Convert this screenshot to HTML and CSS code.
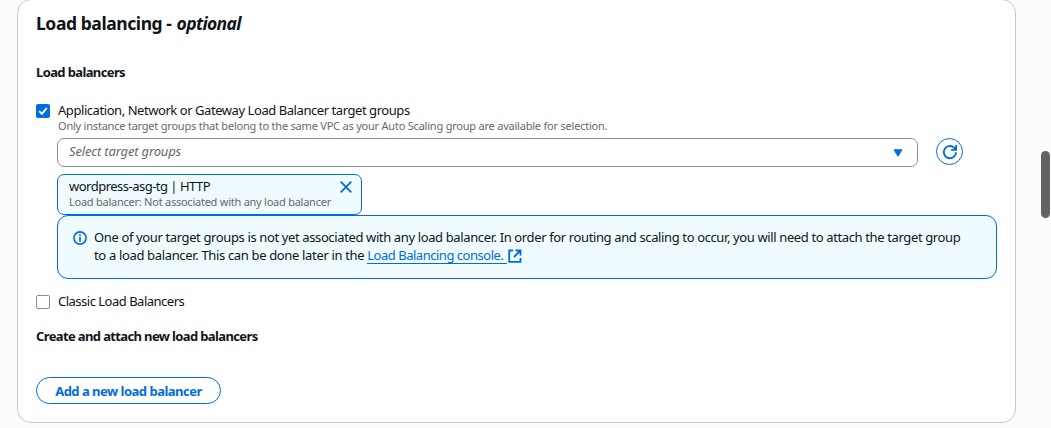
FILE: index.html
```html
<!DOCTYPE html>
<html lang="en">
<head>
<meta charset="utf-8">
<title>Load balancing</title>
<link rel="stylesheet" href="styles.css">
</head>
<body>
<main class="panel">
  <h2 class="title"><span class="title-main">Load balancing -</span> <em class="title-optional">optional</em></h2>
  <h3 class="subhead"><span class="t-lb">Load balancers</span></h3>
  <div class="option option-main">
    <span class="checkbox checked"><svg viewBox="0 0 14 14" width="14" height="14"><path d="M3.2 7.2 5.9 9.9 10.8 4" fill="none" stroke="#fff" stroke-width="1.9"/></svg></span>
    <div class="option-body">
      <div class="label"><span class="t-app">Application, Network or Gateway Load Balancer target groups</span></div>
      <div class="hint"><span class="t-only">Only instance target groups that belong to the same VPC as your Auto Scaling group are available for selection.</span></div>
      <div class="select-row">
        <div class="select"><span class="t-select">Select target groups</span><svg viewBox="0 0 10 8" width="10" height="8"><path d="M1 .8h8L5 7.2Z" fill="#006ce0" stroke="#006ce0" stroke-linejoin="round"/></svg></div>
        <button class="refresh" aria-label="Refresh"><svg viewBox="0 0 16 16" width="16" height="16"><path d="M14 8.2A6.1 6.1 0 1 1 12 3.6L14 5.4M14.1 1v4.9H9.2" fill="none" stroke="#006ce0" stroke-width="1.9"/></svg></button>
      </div>
      <div class="token">
        <div class="token-text">
          <div class="token-name"><span class="t-word">wordpress-asg-tg | HTTP</span></div>
          <div class="token-hint"><span class="t-token">Load balancer: Not associated with any load balancer</span></div>
        </div>
        <svg class="close" viewBox="0 0 12 12" width="12" height="12"><path d="M.7.7l10.6 10.6M11.3.7.7 11.3" fill="none" stroke="#006ce0" stroke-width="1.8"/></svg>
      </div>
      <div class="alert">
        <svg class="info" viewBox="0 0 14 14" width="14" height="14"><circle cx="7" cy="7" r="6.1" fill="none" stroke="#006ce0" stroke-width="1.6"/><path d="M7 3.2v1.7M7 6v4.7" stroke="#006ce0" stroke-width="1.7"/></svg>
        <div class="alert-text">
          <div><span class="t-one">One of your target groups is not yet associated with any load balancer. In order for routing and scaling to occur, you will need to attach the target group</span></div>
          <div class="alert-line"><span class="t-to">to a load balancer. This can be done later in the</span><a class="link"><span class="t-link">Load Balancing console.</span></a><svg viewBox="0 0 14 14" width="14" height="14"><path d="M5 1.5H1.2v11.3h11.3V9M7.5 1.5h5v5M12.3 1.7 6 8" fill="none" stroke="#006ce0" stroke-width="1.8"/></svg></div>
        </div>
      </div>
    </div>
  </div>
  <div class="option option-classic">
    <span class="checkbox"></span>
    <div class="label"><span class="t-classic">Classic Load Balancers</span></div>
  </div>
  <h3 class="subhead subhead-create"><span class="t-create">Create and attach new load balancers</span></h3>
  <button class="add"><span class="t-add">Add a new load balancer</span></button>
</main>
<div class="scrollbar"></div>
</body>
</html>
```
FILE: styles.css
```css
* { box-sizing: border-box; }
body { margin: 0; height: 428px; overflow: hidden; background: #fcfcfd; color: #0f141a; font: 13px/18px "Noto Sans", sans-serif; white-space: nowrap; }
svg { display: block; flex: none; }
h2, h3 { margin: 0; }
button { padding: 0; background: #fff; border: 1px solid #006ce0; color: #006ce0; font: inherit; }
.panel { margin: -1px 0 0 17px; width: 999px; height: 424px; padding: 11px 18px 0; background: #fff; border: 1px solid #c6c6cd; border-radius: 14px; }
.title { height: 24px; font-size: 17.5px; line-height: 24px; font-weight: 700; display: flex; gap: 5px; }
.title-main { letter-spacing: -.42px; }
.title-optional { letter-spacing: -.65px; }
.subhead { margin-top: 28px; font-size: 13px; line-height: 18px; height: 18px; font-weight: 700; }
.t-lb { letter-spacing: -.62px; }
.t-app { letter-spacing: -.44px; }
.t-only { letter-spacing: -.215px; }
.t-select { letter-spacing: -.17px; padding-bottom: 3px; }
.t-word { letter-spacing: -.51px; }
.t-token { letter-spacing: -.245px; }
.t-one { letter-spacing: -.374px; }
.t-to { letter-spacing: -.34px; }
.t-link { letter-spacing: -.48px; }
.t-classic { letter-spacing: -.5px; }
.t-create { letter-spacing: -.63px; }
.t-add { letter-spacing: -.5px; }
.option { display: flex; gap: 8px; }
.option-main { margin-top: 20px; }
.checkbox { flex: none; width: 14px; height: 14px; margin-top: 3px; border: 1px solid #8c8c94; border-radius: 2px; background: #fff; }
.checked { border: 0; background: #006ce0; }
.label { height: 18px; }
.hint { height: 14px; line-height: 14px; font-size: 11px; color: #656871; }
.select-row { display: flex; gap: 18px; align-items: flex-start; height: 29px; margin-top: 5px; margin-left: -1px; }
.select { width: 861px; height: 29px; padding: 0 14px 0 11px; border: 1px solid #8c8c94; border-radius: 7px; display: flex; align-items: center; justify-content: space-between; font-style: italic; color: #656871; }
.refresh { width: 27px; height: 27px; border-radius: 50%; display: grid; place-items: center; }
.token { width: 305px; height: 41px; margin: 7px 0 0 -1px; padding: 2px 9px 0 11px; border: 1px solid #006ce0; border-radius: 7px; background: #f0fbff; display: flex; justify-content: space-between; }
.token-hint { font-size: 11px; line-height: 14px; color: #656871; }
.token-name { height: 18px; }
.close { margin-top: 4px; }
.alert { width: 940px; height: 64px; margin-left: -1px; padding: 12px 15px; border: 1px solid #006ce0; border-radius: 11px; background: #f0fbff; display: flex; gap: 7px; }
.info { margin-top: 3px; }
.alert-line { display: flex; height: 18px; }
.link { color: #006ce0; margin-left: 3px; width: 140px; height: 18px; border-bottom: 1px solid #006ce0; }
.alert-line svg { margin: 3px 0 0 1px; }
.option-classic { margin-top: 13px; }
.option-classic .checkbox { margin-top: 3px; }
.subhead-create { margin-top: 17px; }
.add { display: block; margin-top: 32px; width: 185px; height: 27px; border-radius: 14px; font-weight: 700; }
.scrollbar { position: absolute; left: 1041px; top: 151px; width: 9px; height: 67px; border-radius: 5px; background: #636363; }
```
